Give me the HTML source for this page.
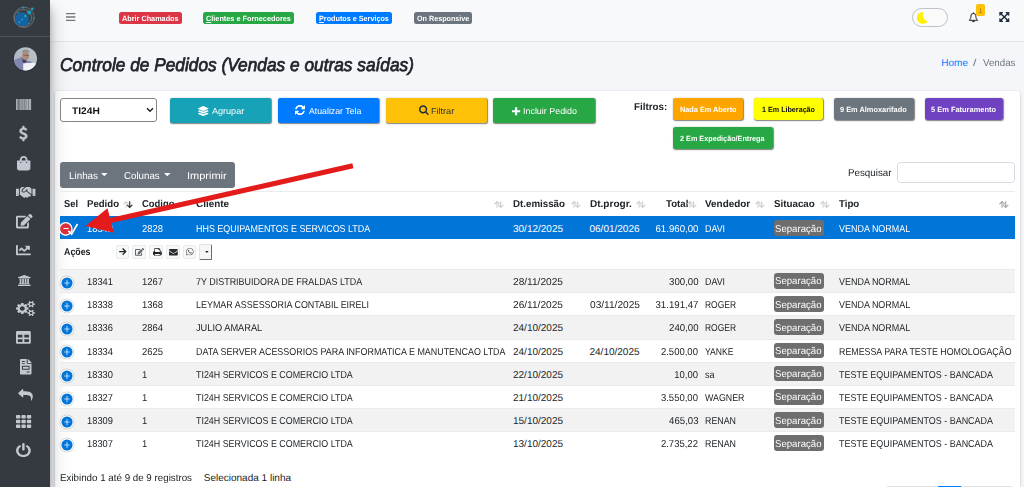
<!DOCTYPE html>
<html lang="pt-BR"><head><meta charset="utf-8"><title>Controle de Pedidos</title><style>
*{box-sizing:border-box}
html,body{margin:0;padding:0}
body{text-rendering:geometricPrecision;width:1024px;height:487px;overflow:hidden;background:#f4f6f9;font-family:"Liberation Sans",sans-serif;position:relative}
.t{position:absolute;white-space:nowrap;line-height:1;display:block}
.i{position:absolute;display:block;overflow:visible}
.b{position:absolute}
</style></head><body>
<div class="b" style="left:50px;top:0px;width:974.00px;height:41.80px;background:#f8f9fa;border-bottom:1px solid #e4e7ea"></div>
<div class="b" style="left:55px;top:91.1px;width:964.80px;height:408.90px;background:#fff;border-radius:2px;box-shadow:0 0 1px rgba(0,0,0,.125),0 1px 3px rgba(0,0,0,.2)"></div>
<div class="b" style="left:0px;top:0px;width:50.00px;height:487.00px;background:#343a40;box-shadow:0 9.5px 19px rgba(0,0,0,.25),0 6.8px 6.8px rgba(0,0,0,.22)"></div>
<div class="b" style="left:0px;top:36px;width:50.00px;height:1.00px;background:#4b545c"></div>
<svg class="i" style="left:10px;top:3px" width="30" height="30" viewBox="10 3 30 30">
<circle cx="24" cy="17.3" r="10.2" fill="#3a4248" stroke="#8a949c" stroke-width=".5"/>
<circle cx="23" cy="18" r="8.6" fill="none" stroke="#9aa3aa" stroke-width=".4"/>
<circle cx="22" cy="19.3" r="6.9" fill="#1363a4"/>
<circle cx="29.2" cy="12.5" r="2" fill="#1aa3c4"/>
<circle cx="23.4" cy="7.4" r="1" fill="#1aa3c4"/>
<circle cx="32.3" cy="8.8" r="1.4" fill="#1aa3c4"/>
<circle cx="25.3" cy="16.1" r="1.3" fill="#1aa3c4"/>
<circle cx="22.2" cy="19.5" r="1" fill="#1aa3c4"/>
<circle cx="19.5" cy="22.3" r="1" fill="#1aa3c4"/>
<circle cx="33.9" cy="18.3" r=".8" fill="#1aa3c4"/>
<circle cx="28.8" cy="23.4" r=".7" fill="#1aa3c4"/>
<circle cx="18.3" cy="12.8" r=".8" fill="#1aa3c4"/>
</svg>
<svg class="i" style="left:10px;top:44px" width="32" height="32" viewBox="10 44 32 32">
<defs><clipPath id="av"><circle cx="25.5" cy="58.8" r="11.6"/></clipPath><filter id="bl" x="-20%" y="-20%" width="140%" height="140%"><feGaussianBlur stdDeviation=".55"/></filter>
<linearGradient id="avbg" x1="0" y1="1" x2="1" y2="0"><stop offset="0" stop-color="#a9b2bd"/><stop offset="1" stop-color="#bcc4cd"/></linearGradient></defs>
<circle cx="25.5" cy="59.6" r="12" fill="rgba(0,0,0,.28)" filter="url(#bl)"/>
<g clip-path="url(#av)">
<rect x="10" y="44" width="32" height="32" fill="url(#avbg)"/>
<g filter="url(#bl)">
<path d="M12 61 L21.8 56.8 L26 60.5 L31.5 61.6 L31.5 64.5 L23.4 64 L23.4 72 L12 72Z" fill="#7f87b1"/>
<ellipse cx="25.6" cy="55.8" rx="3.5" ry="4.9" fill="#b18b79"/>
<path d="M22.4 59 L27 60.8 L24.4 63.8 L22.6 62Z" fill="#3f3f58"/>
<path d="M21.9 52.8 C21.8 48.6 29.6 48.4 29.6 52.6 C27.5 51.2 24 51.2 21.9 52.8Z" fill="#8b8f96"/>
<path d="M23.4 55.2 L29 55.5" stroke="#4a4350" stroke-width=".7" opacity=".8"/>
<path d="M23.3 63.2 L35.4 62.8 L36.2 66 L37 73 L23.3 73Z" fill="#f1f2f4"/>
</g></g></svg>
<div class="b" style="left:15.8px;top:98.9px;width:15.10px;height:10.90px;background:rgba(194,199,208,.38)"></div>
<svg class="i" style="left:15.8px;top:98.9px" width="15.10" height="10.90" viewBox="0 64 512 384" preserveAspectRatio="none"><path fill="#c2c7d0" d="M0 448V64h18v384H0zm26.857-.273V64H36v383.727h-9.143zm27.143 0V64h8.857v383.727H54zm44.857 0V64h8.857v383.727h-8.857zm36 0V64h17.714v383.727h-17.714zm44.857 0V64h8.857v383.727h-8.857zm18 0V64h8.857v383.727h-8.857zm18 0V64h8.857v383.727h-8.857zm35.715 0V64h18v383.727h-18zm44.857 0V64h18v383.727h-18zm35.999 0V64h18.001v383.727h-18.001zm36.001 0V64h18.001v383.727h-18.001zm26.857 0V64h18v383.727h-18zm45.143 0V64h26.857v383.727h-26.857zm35.714 0V64h9.143v383.727H476zm18 .273V64h18v384h-18z"/></svg>
<svg class="i" style="left:18.9px;top:126.2px;stroke:#c2c7d0;stroke-width:60;" width="8.70" height="15.10" viewBox="45.0 -1536.0 933.0 1792.0" preserveAspectRatio="xMidYMid meet"><path fill="#c2c7d0" transform="scale(1,-1)" d="M978 351q0 -153 -99.5 -263.5t-258.5 -136.5v-175q0 -14 -9 -23t-23 -9h-135q-13 0 -22.5 9.5t-9.5 22.5v175q-66 9 -127.5 31t-101.5 44.5t-74 48t-46.5 37.5t-17.5 18q-17 21 -2 41l103 135q7 10 23 12q15 2 24 -9l2 -2q113 -99 243 -125q37 -8 74 -8q81 0 142.5 43 t61.5 122q0 28 -15 53t-33.5 42t-58.5 37.5t-66 32t-80 32.5q-39 16 -61.5 25t-61.5 26.5t-62.5 31t-56.5 35.5t-53.5 42.5t-43.5 49t-35.5 58t-21 66.5t-8.5 78q0 138 98 242t255 134v180q0 13 9.5 22.5t22.5 9.5h135q14 0 23 -9t9 -23v-176q57 -6 110.5 -23t87 -33.5 t63.5 -37.5t39 -29t15 -14q17 -18 5 -38l-81 -146q-8 -15 -23 -16q-14 -3 -27 7q-3 3 -14.5 12t-39 26.5t-58.5 32t-74.5 26t-85.5 11.5q-95 0 -155 -43t-60 -111q0 -26 8.5 -48t29.5 -41.5t39.5 -33t56 -31t60.5 -27t70 -27.5q53 -20 81 -31.5t76 -35t75.5 -42.5t62 -50 t53 -63.5t31.5 -76.5t13 -94z"/></svg>
<svg class="i" style="left:17px;top:155.5px" width="13.40" height="14.50" viewBox="0 0 448 512" preserveAspectRatio="none"><path fill="#c2c7d0" d="M352 160v-32C352 57.42 294.579 0 224 0 153.42 0 96 57.42 96 128v32H0v272c0 44.183 35.817 80 80 80h288c44.183 0 80-35.817 80-80V160h-96zm-192-32c0-35.29 28.710-64 64-64s64 28.710 64 64v32H160v-32zm160 120c-13.255 0-24-10.745-24-24s10.745-24 24-24 24 10.745 24 24-10.745 24-24 24zm-192 0c-13.255 0-24-10.745-24-24s10.745-24 24-24 24 10.745 24 24-10.745 24-24 24z"/></svg>
<svg class="i" style="left:15.8px;top:186.6px" width="19.40" height="10.70" viewBox="0 64 640 384" preserveAspectRatio="none"><path fill="#c2c7d0" d="M434.700 64h-85.900c-8 0-15.700 3-21.600 8.400l-98.300 90c-.1.100-.2.300-.3.400-16.600 15.600-16.300 40.500-2.100 56 12.700 13.900 39.400 17.600 56.100 2.700.1-.1.300-.1.400-.2l79.900-73.200c6.500-5.900 16.700-5.500 22.600 1 6 6.500 5.500 16.600-1 22.600l-26.100 23.900L504 313.800c2.900 2.400 5.500 5 7.900 7.700V128l-54.600-54.600c-5.900-6-14.100-9.400-22.600-9.400zM544 128.200v223.900c0 17.700 14.300 32 32 32h64V128.200h-96zm48 223.900c-8.800 0-16-7.200-16-16s7.200-16 16-16 16 7.200 16 16-7.200 16-16 16zM0 384h64c17.700 0 32-14.300 32-32V128.200H0V384zm48-63.900c8.800 0 16 7.200 16 16s-7.200 16-16 16-16-7.200-16-16c0-8.900 7.200-16 16-16zm435.900 18.600L334.600 217.500l-30 27.500c-29.700 27.100-75.200 24.500-101.700-4.400-26.900-29.400-24.800-74.900 4.400-101.700L289.100 64h-83.800c-8.500 0-16.600 3.400-22.600 9.400L128 128v223.900h18.300l90.500 81.900c27.400 22.300 67.700 18.100 90-9.300l.2-.2 17.900 15.500c15.900 13 39.400 10.500 52.300-5.400l31.400-38.600 5.400 4.400c13.700 11.100 33.900 9.100 45-4.700l9.500-11.700c11.200-13.800 9.100-33.900-4.600-45.100z"/></svg>
<svg class="i" style="left:16.1px;top:213.9px" width="16.60" height="14.40" viewBox="0 0 576 512" preserveAspectRatio="none"><path fill="#c2c7d0" d="M402.600 83.200l90.200 90.200c3.800 3.800 3.800 10 0 13.800L274.400 405.600l-92.800 10.300c-12.400 1.400-22.900-9.100-21.500-21.500l10.300-92.800L388.800 83.200c3.800-3.800 10-3.800 13.800 0zm162-22.900l-48.800-48.800c-15.200-15.200-39.900-15.200-55.200 0l-35.400 35.400c-3.800 3.800-3.800 10 0 13.800l90.200 90.200c3.800 3.800 10 3.800 13.800 0l35.400-35.400c15.200-15.300 15.200-40 0-55.200zM384 346.200V448H64V128h229.800c3.200 0 6.200-1.300 8.500-3.500l40-40c7.600-7.600 2.200-20.500-8.500-20.500H48C21.500 64 0 85.500 0 112v352c0 26.500 21.500 48 48 48h352c26.500 0 48-21.500 48-48V306.200c0-10.700-12.900-16-20.500-8.500l-40 40c-2.200 2.300-3.500 5.300-3.500 8.500z"/></svg>
<svg class="i" style="left:16.1px;top:244.9px" width="14.80" height="10.30" viewBox="0 64 512 384" preserveAspectRatio="none"><path fill="#c2c7d0" d="M496 384H64V80c0-8.840-7.160-16-16-16H16C7.160 64 0 71.160 0 80v336c0 17.670 14.330 32 32 32h464c8.840 0 16-7.160 16-16v-32c0-8.840-7.160-16-16-16zM464 96H345.940c-21.380 0-32.090 25.850-16.970 40.970l32.400 32.400L288 242.750l-73.370-73.370c-12.500-12.500-32.760-12.500-45.250 0l-68.690 68.690c-6.250 6.250-6.250 16.380 0 22.630l22.620 22.620c6.250 6.250 16.380 6.250 22.630 0L192 237.250l73.370 73.370c12.500 12.500 32.760 12.500 45.250 0l96-96 32.400 32.400c15.120 15.120 40.970 4.410 40.970-16.970V112c.01-8.840-7.150-16-15.990-16z"/></svg>
<svg class="i" style="left:17.8px;top:274.6px;" width="12.60" height="10.90" viewBox="0.0 -1536.0 1920.0 1792.0" preserveAspectRatio="none"><path fill="#c2c7d0" transform="scale(1,-1)" d="M960 1536l960 -384v-128h-128q0 -26 -20.5 -45t-48.5 -19h-1526q-28 0 -48.5 19t-20.5 45h-128v128zM256 896h256v-768h128v768h256v-768h128v768h256v-768h128v768h256v-768h59q28 0 48.5 -19t20.5 -45v-64h-1664v64q0 26 20.5 45t48.5 19h59v768zM1851 -64 q28 0 48.5 -19t20.5 -45v-128h-1920v128q0 26 20.5 45t48.5 19h1782z"/></svg>
<svg class="i" style="left:15.8px;top:301px;" width="18.90" height="15.00" viewBox="0.0 -1520.0 1920.0 1761.0" preserveAspectRatio="none"><path fill="#c2c7d0" transform="scale(1,-1)" d="M896 640q0 106 -75 181t-181 75t-181 -75t-75 -181t75 -181t181 -75t181 75t75 181zM1664 128q0 52 -38 90t-90 38t-90 -38t-38 -90q0 -53 37.5 -90.5t90.5 -37.5t90.5 37.5t37.5 90.5zM1664 1152q0 52 -38 90t-90 38t-90 -38t-38 -90q0 -53 37.5 -90.5t90.5 -37.5 t90.5 37.5t37.5 90.5zM1280 731v-185q0 -10 -7 -19.5t-16 -10.5l-155 -24q-11 -35 -32 -76q34 -48 90 -115q7 -11 7 -20q0 -12 -7 -19q-23 -30 -82.5 -89.5t-78.5 -59.5q-11 0 -21 7l-115 90q-37 -19 -77 -31q-11 -108 -23 -155q-7 -24 -30 -24h-186q-11 0 -20 7.5t-10 17.5 l-23 153q-34 10 -75 31l-118 -89q-7 -7 -20 -7q-11 0 -21 8q-144 133 -144 160q0 9 7 19q10 14 41 53t47 61q-23 44 -35 82l-152 24q-10 1 -17 9.5t-7 19.5v185q0 10 7 19.5t16 10.5l155 24q11 35 32 76q-34 48 -90 115q-7 11 -7 20q0 12 7 20q22 30 82 89t79 59q11 0 21 -7 l115 -90q34 18 77 32q11 108 23 154q7 24 30 24h186q11 0 20 -7.5t10 -17.5l23 -153q34 -10 75 -31l118 89q8 7 20 7q11 0 21 -8q144 -133 144 -160q0 -8 -7 -19q-12 -16 -42 -54t-45 -60q23 -48 34 -82l152 -23q10 -2 17 -10.5t7 -19.5zM1920 198v-140q0 -16 -149 -31 q-12 -27 -30 -52q51 -113 51 -138q0 -4 -4 -7q-122 -71 -124 -71q-8 0 -46 47t-52 68q-20 -2 -30 -2t-30 2q-14 -21 -52 -68t-46 -47q-2 0 -124 71q-4 3 -4 7q0 25 51 138q-18 25 -30 52q-149 15 -149 31v140q0 16 149 31q13 29 30 52q-51 113 -51 138q0 4 4 7q4 2 35 20 t59 34t30 16q8 0 46 -46.5t52 -67.5q20 2 30 2t30 -2q51 71 92 112l6 2q4 0 124 -70q4 -3 4 -7q0 -25 -51 -138q17 -23 30 -52q149 -15 149 -31zM1920 1222v-140q0 -16 -149 -31q-12 -27 -30 -52q51 -113 51 -138q0 -4 -4 -7q-122 -71 -124 -71q-8 0 -46 47t-52 68 q-20 -2 -30 -2t-30 2q-14 -21 -52 -68t-46 -47q-2 0 -124 71q-4 3 -4 7q0 25 51 138q-18 25 -30 52q-149 15 -149 31v140q0 16 149 31q13 29 30 52q-51 113 -51 138q0 4 4 7q4 2 35 20t59 34t30 16q8 0 46 -46.5t52 -67.5q20 2 30 2t30 -2q51 71 92 112l6 2q4 0 124 -70 q4 -3 4 -7q0 -25 -51 -138q17 -23 30 -52q149 -15 149 -31z"/></svg>
<svg class="i" style="left:16.1px;top:331.2px" width="14.80" height="12.80" viewBox="0 32 512 448" preserveAspectRatio="none"><path fill="#c2c7d0" d="M464 32H48C21.490 32 0 53.490 0 80v352c0 26.510 21.490 48 48 48h416c26.510 0 48-21.490 48-48V80c0-26.510-21.490-48-48-48zM224 416H64v-96h160v96zm0-160H64v-96h160v96zm224 160H288v-96h160v96zm0-160H288v-96h160v96z"/></svg>
<svg class="i" style="left:19.6px;top:359.3px" width="11.50" height="15.50" viewBox="0 0 384 512" preserveAspectRatio="none"><path fill="#c2c7d0" d="M288 256H96v64h192v-64zm89-151L279.100 7c-4.500-4.500-10.600-7-17-7H256v128h128v-6.100c0-6.300-2.500-12.400-7-16.900zm-153 31V0H24C10.700 0 0 10.700 0 24v464c0 13.300 10.700 24 24 24h336c13.300 0 24-10.700 24-24V160H248c-13.200 0-24-10.800-24-24zM64 72c0-4.420 3.580-8 8-8h80c4.420 0 8 3.580 8 8v16c0 4.420-3.580 8-8 8H72c-4.420 0-8-3.580-8-8V72zm0 64c0-4.420 3.580-8 8-8h80c4.420 0 8 3.580 8 8v16c0 4.420-3.580 8-8 8H72c-4.420 0-8-3.580-8-8v-16zm256 304c0 4.420-3.580 8-8 8h-80c-4.420 0-8-3.580-8-8v-16c0-4.420 3.580-8 8-8h80c4.420 0 8 3.580 8 8v16zm0-200v96c0 8.840-7.160 16-16 16H80c-8.840 0-16-7.160-16-16v-96c0-8.840 7.160-16 16-16h224c8.840 0 16 7.160 16 16z"/></svg>
<svg class="i" style="left:17.8px;top:388.7px;" width="14.80" height="11.70" viewBox="0.0 -1472.0 1792.0 1600.0" preserveAspectRatio="none"><path fill="#c2c7d0" transform="scale(1,-1)" d="M1792 416q0 -166 -127 -451q-3 -7 -10.5 -24t-13.5 -30t-13 -22q-12 -17 -28 -17q-15 0 -23.5 10t-8.5 25q0 9 2.5 26.5t2.5 23.5q5 68 5 123q0 101 -17.5 181t-48.5 138.5t-80 101t-105.5 69.5t-133 42.5t-154 21.5t-175.5 6h-224v-256q0 -26 -19 -45t-45 -19t-45 19 l-512 512q-19 19 -19 45t19 45l512 512q19 19 45 19t45 -19t19 -45v-256h224q713 0 875 -403q53 -134 53 -333z"/></svg>
<svg class="i" style="left:16.2px;top:415px;" width="15.20" height="13.00" viewBox="0.0 -1408.0 1792.0 1408.0" preserveAspectRatio="none"><path fill="#c2c7d0" transform="scale(1,-1)" d="M512 288v-192q0 -40 -28 -68t-68 -28h-320q-40 0 -68 28t-28 68v192q0 40 28 68t68 28h320q40 0 68 -28t28 -68zM512 800v-192q0 -40 -28 -68t-68 -28h-320q-40 0 -68 28t-28 68v192q0 40 28 68t68 28h320q40 0 68 -28t28 -68zM1152 288v-192q0 -40 -28 -68t-68 -28h-320 q-40 0 -68 28t-28 68v192q0 40 28 68t68 28h320q40 0 68 -28t28 -68zM512 1312v-192q0 -40 -28 -68t-68 -28h-320q-40 0 -68 28t-28 68v192q0 40 28 68t68 28h320q40 0 68 -28t28 -68zM1152 800v-192q0 -40 -28 -68t-68 -28h-320q-40 0 -68 28t-28 68v192q0 40 28 68t68 28 h320q40 0 68 -28t28 -68zM1792 288v-192q0 -40 -28 -68t-68 -28h-320q-40 0 -68 28t-28 68v192q0 40 28 68t68 28h320q40 0 68 -28t28 -68zM1152 1312v-192q0 -40 -28 -68t-68 -28h-320q-40 0 -68 28t-28 68v192q0 40 28 68t68 28h320q40 0 68 -28t28 -68zM1792 800v-192 q0 -40 -28 -68t-68 -28h-320q-40 0 -68 28t-28 68v192q0 40 28 68t68 28h320q40 0 68 -28t28 -68zM1792 1312v-192q0 -40 -28 -68t-68 -28h-320q-40 0 -68 28t-28 68v192q0 40 28 68t68 28h320q40 0 68 -28t28 -68z"/></svg>
<svg class="i" style="left:16.2px;top:442.6px;" width="14.80" height="14.10" viewBox="0.0 -1536.0 1536.0 1664.0" preserveAspectRatio="none"><path fill="#c2c7d0" transform="scale(1,-1)" d="M1536 640q0 -156 -61 -298t-164 -245t-245 -164t-298 -61t-298 61t-245 164t-164 245t-61 298q0 182 80.5 343t226.5 270q43 32 95.5 25t83.5 -50q32 -42 24.5 -94.5t-49.5 -84.5q-98 -74 -151.5 -181t-53.5 -228q0 -104 40.5 -198.5t109.5 -163.5t163.5 -109.5 t198.5 -40.5t198.5 40.5t163.5 109.5t109.5 163.5t40.5 198.5q0 121 -53.5 228t-151.5 181q-42 32 -49.5 84.5t24.5 94.5q31 43 84 50t95 -25q146 -109 226.5 -270t80.5 -343zM896 1408v-640q0 -52 -38 -90t-90 -38t-90 38t-38 90v640q0 52 38 90t90 38t90 -38t38 -90z"/></svg>
<svg class="i" style="left:65.9px;top:12px" width="9.4" height="10" viewBox="0 0 9.4 10"><path d="M0 .9h9.4v1.3h-9.4zM0 4.25h9.4v1.4h-9.4zM0 7.7h9.4v1.3h-9.4z" fill="#72777c"/></svg>
<div class="b" style="left:118.5px;top:12px;width:63.00px;height:12.00px;background:#dc3545;border-radius:2.5px"></div>
<span id="t1" class="t" style="left:121.7px;transform-origin:0 0;top:15.00px;font-size:7.5px;font-weight:700;color:#fff;font-style:normal;transform:scaleX(0.9699);">Abrir Chamados</span>
<div class="b" style="left:203px;top:12px;width:91.30px;height:12.00px;background:#28a745;border-radius:2.5px"></div>
<span id="t2" class="t" style="left:206.2px;transform-origin:0 0;top:15.00px;font-size:7.5px;font-weight:700;color:#fff;font-style:normal;transform:scaleX(0.9745);"><u>C</u>lientes e Fornecedores</span>
<div class="b" style="left:316px;top:12px;width:76.30px;height:12.00px;background:#007bff;border-radius:2.5px"></div>
<span id="t3" class="t" style="left:319.2px;transform-origin:0 0;top:15.00px;font-size:7.5px;font-weight:700;color:#fff;font-style:normal;transform:scaleX(0.9635);"><u>P</u>rodutos e Serviços</span>
<div class="b" style="left:413.8px;top:12px;width:58.70px;height:12.00px;background:#6c757d;border-radius:2.5px"></div>
<span id="t4" class="t" style="left:417.0px;transform-origin:0 0;top:15.00px;font-size:7.5px;font-weight:700;color:#fff;font-style:normal;transform:scaleX(0.9577);">On Responsive</span>
<div class="b" style="left:912px;top:8.2px;width:36.00px;height:18.60px;background:#fafafa;border:1.2px solid #bcc2c8;border-radius:10px"></div>
<svg class="i" style="left:916.5px;top:12px" width="12" height="12" viewBox="0 0 12 12"><path d="M6.3 .1 A5.9 5.9 0 1 0 10.6 9.4 A7 7 0 0 1 6.3 .1Z" fill="#fff000"/></svg>
<svg class="i" style="left:969px;top:11.7px;stroke:#343a40;stroke-width:70;" width="8.80" height="10.60" viewBox="64.0 -1536.0 1664.0 1792.0" preserveAspectRatio="xMidYMid meet"><path fill="#343a40" transform="scale(1,-1)" d="M912 -160q0 16 -16 16q-59 0 -101.5 42.5t-42.5 101.5q0 16 -16 16t-16 -16q0 -73 51.5 -124.5t124.5 -51.5q16 0 16 16zM246 128h1300q-266 300 -266 832q0 51 -24 105t-69 103t-121.5 80.5t-169.5 31.5t-169.5 -31.5t-121.5 -80.5t-69 -103t-24 -105q0 -532 -266 -832z M1728 128q0 -52 -38 -90t-90 -38h-448q0 -106 -75 -181t-181 -75t-181 75t-75 181h-448q-52 0 -90 38t-38 90q50 42 91 88t85 119.5t74.5 158.5t50 206t19.5 260q0 152 117 282.5t307 158.5q-8 19 -8 39q0 40 28 68t68 28t68 -28t28 -68q0 -20 -8 -39q190 -28 307 -158.5 t117 -282.5q0 -139 19.5 -260t50 -206t74.5 -158.5t85 -119.5t91 -88z"/></svg>
<div class="b" style="left:976.1px;top:4.1px;width:8.70px;height:11.70px;background:#ffc107;border-radius:2px"></div>
<span id="t5" class="t" style="left:979.2px;transform-origin:0 0;top:9.00px;font-size:6.6px;font-weight:400;color:#7a6414;font-style:normal;transform:scaleX(0.8170);">1</span>
<svg class="i" style="left:999.4px;top:12px;" width="10.60" height="10.00" viewBox="0.0 -1408.0 1536.0 1536.0" preserveAspectRatio="xMidYMid meet"><path fill="#1f2d3d" transform="scale(1,-1)" d="M1283 995l-355 -355l355 -355l144 144q29 31 70 14q39 -17 39 -59v-448q0 -26 -19 -45t-45 -19h-448q-42 0 -59 40q-17 39 14 69l144 144l-355 355l-355 -355l144 -144q31 -30 14 -69q-17 -40 -59 -40h-448q-26 0 -45 19t-19 45v448q0 42 40 59q39 17 69 -14l144 -144 l355 355l-355 355l-144 -144q-19 -19 -45 -19q-12 0 -24 5q-40 17 -40 59v448q0 26 19 45t45 19h448q42 0 59 -40q17 -39 -14 -69l-144 -144l355 -355l355 355l-144 144q-31 30 -14 69q17 40 59 40h448q26 0 45 -19t19 -45v-448q0 -42 -39 -59q-13 -5 -25 -5q-26 0 -45 19z "/></svg>
<span id="t6" class="t" style="left:60px;transform-origin:0 0;top:56.00px;font-size:18.5px;font-weight:400;color:#212529;font-style:italic;transform:scaleX(0.9345);-webkit-text-stroke:.75px #212529;">Controle de Pedidos (Vendas e outras saídas)</span>
<span id="t7" class="t" style="left:941.3px;transform-origin:0 0;top:59.00px;font-size:10px;font-weight:400;color:#007bff;font-style:normal;">Home</span>
<span id="t8" class="t" style="left:973.4px;transform-origin:0 0;top:59.00px;font-size:10px;font-weight:400;color:#6c757d;font-style:normal;transform:scaleX(1.2225);">/</span>
<span id="t9" class="t" style="left:982.8px;transform-origin:0 0;top:59.00px;font-size:10px;font-weight:400;color:#6c757d;font-style:normal;transform:scaleX(0.9738);">Vendas</span>
<div class="b" style="left:60px;top:97.5px;width:96.50px;height:24.50px;background:#fff;border:1px solid #858585;border-radius:3px"></div>
<span id="t10" class="t" style="left:71.6px;transform-origin:0 0;top:107.00px;font-size:9.5px;font-weight:700;color:#111;font-style:normal;transform:scaleX(1.0744);">TI24H</span>
<svg class="i" style="left:146px;top:107px" width="8" height="6" viewBox="0 0 8 6"><path d="M1 1.2 L4 4.3 L7 1.2" fill="none" stroke="#222" stroke-width="1.4"/></svg>
<div class="b" style="left:170px;top:97.8px;width:101.20px;height:25.40px;background:#17a2b8;border-radius:2.5px;box-shadow:.8px .8px 1.2px rgba(0,0,0,.5)"></div>
<svg class="i" style="left:198px;top:105.8px" width="10.50" height="10.10" viewBox="0 0 512 512" preserveAspectRatio="none"><path fill="#fff" d="M12.410 148.020l232.940 105.670c6.800 3.090 14.490 3.090 21.290 0l232.940-105.670c16.550-7.510 16.550-32.520 0-40.030L266.650 2.310a25.607 25.607 0 0 0-21.290 0L12.410 107.980c-16.550 7.510-16.550 32.530 0 40.040zm487.180 88.280l-58.090-26.330-161.640 73.270c-7.560 3.430-15.590 5.170-23.860 5.170s-16.290-1.740-23.860-5.170L70.510 209.970l-58.100 26.330c-16.550 7.500-16.550 32.500 0 40l232.940 105.590c6.800 3.080 14.490 3.080 21.290 0L499.590 276.300c16.550-7.500 16.550-32.500 0-40zm0 127.800l-57.870-26.230-161.860 73.370c-7.560 3.430-15.590 5.170-23.860 5.170s-16.290-1.740-23.860-5.170L70.290 337.870 12.410 364.100c-16.550 7.500-16.550 32.500 0 40l232.940 105.590c6.800 3.080 14.490 3.080 21.290 0L499.590 404.100c16.550-7.500 16.550-32.500 0-40z"/></svg>
<span id="t11" class="t" style="left:212px;transform-origin:0 0;top:107.00px;font-size:8.8px;font-weight:400;color:#fff;font-style:normal;transform:scaleX(1.0289);">Agrupar</span>
<div class="b" style="left:277.8px;top:97.8px;width:101.20px;height:25.40px;background:#007bff;border-radius:2.5px;box-shadow:.8px .8px 1.2px rgba(0,0,0,.5)"></div>
<div class="b" style="left:385.5px;top:97.8px;width:101.10px;height:25.40px;background:#ffc107;border-radius:2.5px;box-shadow:.8px .8px 1.2px rgba(0,0,0,.5)"></div>
<div class="b" style="left:493px;top:97.8px;width:102.00px;height:25.40px;background:#28a745;border-radius:2.5px;box-shadow:.8px .8px 1.2px rgba(0,0,0,.5)"></div>
<svg class="i" style="left:295px;top:105.2px;" width="10.00" height="10.00" viewBox="0.0 -1408.0 1536.0 1536.0" preserveAspectRatio="xMidYMid meet"><path fill="#fff" transform="scale(1,-1)" d="M1511 480q0 -5 -1 -7q-64 -268 -268 -434.5t-478 -166.5q-146 0 -282.5 55t-243.5 157l-129 -129q-19 -19 -45 -19t-45 19t-19 45v448q0 26 19 45t45 19h448q26 0 45 -19t19 -45t-19 -45l-137 -137q71 -66 161 -102t187 -36q134 0 250 65t186 179q11 17 53 117 q8 23 30 23h192q13 0 22.5 -9.5t9.5 -22.5zM1536 1280v-448q0 -26 -19 -45t-45 -19h-448q-26 0 -45 19t-19 45t19 45l138 138q-148 137 -349 137q-134 0 -250 -65t-186 -179q-11 -17 -53 -117q-8 -23 -30 -23h-199q-13 0 -22.5 9.5t-9.5 22.5v7q65 268 270 434.5t480 166.5 q146 0 284 -55.5t245 -156.5l130 129q19 19 45 19t45 -19t19 -45z"/></svg>
<span id="t12" class="t" style="left:309.4px;transform-origin:0 0;top:107.00px;font-size:8.8px;font-weight:400;color:#fff;font-style:normal;transform:scaleX(0.9932);">Atualizar Tela</span>
<svg class="i" style="left:418.5px;top:104.75px;" width="9.70" height="10.25" viewBox="0.0 -1408.0 1664.0 1664.0" preserveAspectRatio="xMidYMid meet"><path fill="#1f2d3d" transform="scale(1,-1)" d="M1152 704q0 185 -131.5 316.5t-316.5 131.5t-316.5 -131.5t-131.5 -316.5t131.5 -316.5t316.5 -131.5t316.5 131.5t131.5 316.5zM1664 -128q0 -52 -38 -90t-90 -38q-54 0 -90 38l-343 342q-179 -124 -399 -124q-143 0 -273.5 55.5t-225 150t-150 225t-55.5 273.5 t55.5 273.5t150 225t225 150t273.5 55.5t273.5 -55.5t225 -150t150 -225t55.5 -273.5q0 -220 -124 -399l343 -343q37 -37 37 -90z"/></svg>
<span id="t13" class="t" style="left:430.9px;transform-origin:0 0;top:107.00px;font-size:8.8px;font-weight:400;color:#1f2d3d;font-style:normal;transform:scaleX(1.0318);">Filtrar</span>
<svg class="i" style="left:512px;top:106.5px;" width="8.20" height="8.50" viewBox="0.0 -1408.0 1408.0 1408.0" preserveAspectRatio="xMidYMid meet"><path fill="#fff" transform="scale(1,-1)" d="M1408 800v-192q0 -40 -28 -68t-68 -28h-416v-416q0 -40 -28 -68t-68 -28h-192q-40 0 -68 28t-28 68v416h-416q-40 0 -68 28t-28 68v192q0 40 28 68t68 28h416v416q0 40 28 68t68 28h192q40 0 68 -28t28 -68v-416h416q40 0 68 -28t28 -68z"/></svg>
<span id="t14" class="t" style="left:522.8px;transform-origin:0 0;top:107.00px;font-size:8.8px;font-weight:400;color:#fff;font-style:normal;transform:scaleX(1.0129);">Incluir Pedido</span>
<span id="t15" class="t" style="left:633.6px;transform-origin:0 0;top:103.00px;font-size:10px;font-weight:700;color:#212529;font-style:normal;transform:scaleX(0.9781);">Filtros:</span>
<div class="b" style="left:672.75px;top:98.2px;width:70.50px;height:21.70px;background:#ffa500;border-radius:3px;box-shadow:.8px .8px 1.2px rgba(0,0,0,.5)"></div>
<span id="t16" class="t" style="left:679.9px;transform-origin:0 0;top:106.00px;font-size:7.5px;font-weight:700;color:#fff;font-style:normal;transform:scaleX(0.9745);">Nada Em Aberto</span>
<div class="b" style="left:754px;top:98.2px;width:69.00px;height:21.70px;background:#ffff00;border-radius:3px;box-shadow:.8px .8px 1.2px rgba(0,0,0,.5)"></div>
<span id="t17" class="t" style="left:762px;transform-origin:0 0;top:106.00px;font-size:7.5px;font-weight:700;color:#111;font-style:normal;transform:scaleX(0.9558);">1 Em Liberação</span>
<div class="b" style="left:833.5px;top:98.2px;width:80.75px;height:21.70px;background:#6c757d;border-radius:3px;box-shadow:.8px .8px 1.2px rgba(0,0,0,.5)"></div>
<span id="t18" class="t" style="left:840px;transform-origin:0 0;top:106.00px;font-size:7.5px;font-weight:700;color:#fff;font-style:normal;transform:scaleX(0.9864);">9 Em Almoxarifado</span>
<div class="b" style="left:924.5px;top:98.2px;width:78.00px;height:21.70px;background:#6f42c1;border-radius:3px;box-shadow:.8px .8px 1.2px rgba(0,0,0,.5)"></div>
<span id="t19" class="t" style="left:931px;transform-origin:0 0;top:106.00px;font-size:7.5px;font-weight:700;color:#fff;font-style:normal;transform:scaleX(0.9933);">5 Em Faturamento</span>
<div class="b" style="left:672.75px;top:127.2px;width:99.75px;height:21.70px;background:#28a745;border-radius:3px;box-shadow:.8px .8px 1.2px rgba(0,0,0,.5)"></div>
<span id="t20" class="t" style="left:679.9px;transform-origin:0 0;top:135.00px;font-size:7.5px;font-weight:700;color:#fff;font-style:normal;transform:scaleX(0.9663);">2 Em Expedição/Entrega</span>
<div class="b" style="left:60px;top:162.2px;width:174.80px;height:25.60px;background:#6c757d;border-radius:3px"></div>
<span id="t21" class="t" style="left:69px;transform-origin:0 0;top:172.00px;font-size:10px;font-weight:400;color:#fff;font-style:normal;transform:scaleX(0.9841);">Linhas</span>
<span id="t22" class="t" style="left:124.25px;transform-origin:0 0;top:172.00px;font-size:10px;font-weight:400;color:#fff;font-style:normal;transform:scaleX(0.9740);">Colunas</span>
<span id="t23" class="t" style="left:186.6px;transform-origin:0 0;top:172.00px;font-size:10px;font-weight:400;color:#fff;font-style:normal;transform:scaleX(1.0994);">Imprimir</span>
<svg class="i" style="left:100.8px;top:172.5px" width="6.6" height="3.4" viewBox="0 0 10 5"><path d="M0 0H10L5 5Z" fill="#fff"/></svg>
<svg class="i" style="left:163.5px;top:172.5px" width="6.6" height="3.4" viewBox="0 0 10 5"><path d="M0 0H10L5 5Z" fill="#fff"/></svg>
<span id="t24" class="t" style="left:848.1px;transform-origin:0 0;top:169.00px;font-size:10px;font-weight:400;color:#212529;font-style:normal;transform:scaleX(0.9782);">Pesquisar</span>
<div class="b" style="left:896.5px;top:162.2px;width:118.80px;height:20.70px;background:#fff;border:1px solid #d6dbe0;border-radius:3.5px"></div>
<div class="b" style="left:60px;top:191.2px;width:955.30px;height:0.90px;background:#e9ecef"></div>
<div class="b" style="left:60px;top:215.5px;width:955.30px;height:0.90px;background:#eceef0"></div>
<span id="t25" class="t" style="left:63.5px;transform-origin:0 0;top:200.00px;font-size:10px;font-weight:700;color:#212529;font-style:normal;transform:scaleX(0.9324);">Sel</span>
<span id="t26" class="t" style="left:87px;transform-origin:0 0;top:200.00px;font-size:10px;font-weight:700;color:#212529;font-style:normal;transform:scaleX(0.9597);">Pedido</span>
<svg class="i" style="left:122.9px;top:201.3px" width="9.8" height="7" viewBox="0 0 9.8 7"><path d="M3 .5V6.7M.4 3.2L3 .5L5.6 3.2" fill="none" stroke="#d4d6d9" stroke-width="1.15"/><path d="M6.7 .3V6.5M4.1 3.8L6.7 6.5L9.3 3.8" fill="none" stroke="#2b2f33" stroke-width="1.15"/></svg>
<span id="t27" class="t" style="left:141.5px;transform-origin:0 0;top:200.00px;font-size:10px;font-weight:700;color:#212529;font-style:normal;transform:scaleX(0.9437);">Codigo</span>
<span id="t28" class="t" style="left:196px;transform-origin:0 0;top:200.00px;font-size:10px;font-weight:700;color:#212529;font-style:normal;transform:scaleX(0.9897);">Cliente</span>
<svg class="i" style="left:494.1px;top:201.3px" width="9.8" height="7" viewBox="0 0 9.8 7"><path d="M3 .5V6.7M.4 3.2L3 .5L5.6 3.2" fill="none" stroke="#cdd0d3" stroke-width="1.15"/><path d="M6.7 .3V6.5M4.1 3.8L6.7 6.5L9.3 3.8" fill="none" stroke="#cdd0d3" stroke-width="1.15"/></svg>
<span id="t29" class="t" style="left:513.25px;transform-origin:0 0;top:200.00px;font-size:10px;font-weight:700;color:#212529;font-style:normal;transform:scaleX(0.9745);">Dt.emissão</span>
<svg class="i" style="left:570.7px;top:201.3px" width="9.8" height="7" viewBox="0 0 9.8 7"><path d="M3 .5V6.7M.4 3.2L3 .5L5.6 3.2" fill="none" stroke="#cdd0d3" stroke-width="1.15"/><path d="M6.7 .3V6.5M4.1 3.8L6.7 6.5L9.3 3.8" fill="none" stroke="#cdd0d3" stroke-width="1.15"/></svg>
<span id="t30" class="t" style="left:590px;transform-origin:0 0;top:200.00px;font-size:10px;font-weight:700;color:#212529;font-style:normal;transform:scaleX(1.0031);">Dt.progr.</span>
<svg class="i" style="left:636.4px;top:201.3px" width="9.8" height="7" viewBox="0 0 9.8 7"><path d="M3 .5V6.7M.4 3.2L3 .5L5.6 3.2" fill="none" stroke="#cdd0d3" stroke-width="1.15"/><path d="M6.7 .3V6.5M4.1 3.8L6.7 6.5L9.3 3.8" fill="none" stroke="#cdd0d3" stroke-width="1.15"/></svg>
<span id="t31" class="t" style="left:665.5px;transform-origin:0 0;top:200.00px;font-size:10px;font-weight:700;color:#212529;font-style:normal;transform:scaleX(0.9673);">Total</span>
<svg class="i" style="left:686.9px;top:201.3px" width="9.8" height="7" viewBox="0 0 9.8 7"><path d="M3 .5V6.7M.4 3.2L3 .5L5.6 3.2" fill="none" stroke="#cdd0d3" stroke-width="1.15"/><path d="M6.7 .3V6.5M4.1 3.8L6.7 6.5L9.3 3.8" fill="none" stroke="#cdd0d3" stroke-width="1.15"/></svg>
<span id="t32" class="t" style="left:705px;transform-origin:0 0;top:200.00px;font-size:10px;font-weight:700;color:#212529;font-style:normal;transform:scaleX(0.9917);">Vendedor</span>
<svg class="i" style="left:755.1px;top:201.3px" width="9.8" height="7" viewBox="0 0 9.8 7"><path d="M3 .5V6.7M.4 3.2L3 .5L5.6 3.2" fill="none" stroke="#cdd0d3" stroke-width="1.15"/><path d="M6.7 .3V6.5M4.1 3.8L6.7 6.5L9.3 3.8" fill="none" stroke="#cdd0d3" stroke-width="1.15"/></svg>
<span id="t33" class="t" style="left:774.25px;transform-origin:0 0;top:200.00px;font-size:10px;font-weight:700;color:#212529;font-style:normal;transform:scaleX(0.9775);">Situacao</span>
<svg class="i" style="left:819.5px;top:201.3px" width="9.8" height="7" viewBox="0 0 9.8 7"><path d="M3 .5V6.7M.4 3.2L3 .5L5.6 3.2" fill="none" stroke="#cdd0d3" stroke-width="1.15"/><path d="M6.7 .3V6.5M4.1 3.8L6.7 6.5L9.3 3.8" fill="none" stroke="#cdd0d3" stroke-width="1.15"/></svg>
<span id="t34" class="t" style="left:838.5px;transform-origin:0 0;top:200.00px;font-size:10px;font-weight:700;color:#212529;font-style:normal;transform:scaleX(0.9672);">Tipo</span>
<svg class="i" style="left:999.4px;top:201.3px" width="9.8" height="7" viewBox="0 0 9.8 7"><path d="M3 .5V6.7M.4 3.2L3 .5L5.6 3.2" fill="none" stroke="#a4a8ac" stroke-width="1.15"/><path d="M6.7 .3V6.5M4.1 3.8L6.7 6.5L9.3 3.8" fill="none" stroke="#a4a8ac" stroke-width="1.15"/></svg>
<div class="b" style="left:60px;top:216.3px;width:955.30px;height:22.60px;background:#0275d8"></div>
<span id="t35" class="t" style="left:87px;transform-origin:0 0;top:225.00px;font-size:10px;font-weight:400;color:#fff;font-style:normal;transform:scaleX(0.9348);">18342</span>
<span id="t36" class="t" style="left:141.5px;transform-origin:0 0;top:225.00px;font-size:10px;font-weight:400;color:#fff;font-style:normal;transform:scaleX(0.9438);">2828</span>
<span id="t37" class="t" style="left:196px;transform-origin:0 0;top:225.00px;font-size:10px;font-weight:400;color:#fff;font-style:normal;transform:scaleX(0.8942);">HHS EQUIPAMENTOS E SERVICOS LTDA</span>
<span id="t38" class="t" style="left:513px;transform-origin:0 0;top:225.00px;font-size:10px;font-weight:400;color:#fff;font-style:normal;">30/12/2025</span>
<span id="t39" class="t" style="left:589.5px;transform-origin:0 0;top:225.00px;font-size:10px;font-weight:400;color:#fff;font-style:normal;">06/01/2026</span>
<span id="t40" class="t" style="right:325.75px;transform-origin:100% 0;top:225.00px;font-size:10px;font-weight:400;color:#fff;font-style:normal;transform:scaleX(0.9663);">61.960,00</span>
<span id="t41" class="t" style="left:705px;transform-origin:0 0;top:225.00px;font-size:10px;font-weight:400;color:#fff;font-style:normal;transform:scaleX(0.8846);">DAVI</span>
<div class="b" style="left:774.25px;top:220.1px;width:49.25px;height:15.60px;background:#6e6e6e;border-radius:3px"></div>
<span id="t42" class="t" style="left:775.1px;transform-origin:0 0;top:225.00px;font-size:10px;font-weight:400;color:#fff;font-style:normal;transform:scaleX(0.9612);">Separação</span>
<span id="t43" class="t" style="left:838.5px;transform-origin:0 0;top:225.00px;font-size:10px;font-weight:400;color:#fff;font-style:normal;transform:scaleX(0.8966);">VENDA NORMAL</span>
<svg class="i" style="left:56px;top:219px" width="24" height="20" viewBox="56 219 24 20"><circle cx="65.7" cy="229.3" r="7.1" fill="rgba(0,0,0,.2)"/><circle cx="65.7" cy="228.9" r="7" fill="#fff"/><circle cx="65.7" cy="228.9" r="5.6" fill="#d9303c"/><path d="M63.4 228.5H68.6" stroke="#fff" stroke-width="1.1"/><path d="M68.3 230.9L71.6 234.1L77.5 224" fill="none" stroke="#fff" stroke-width="1.7"/></svg>
<span id="t44" class="t" style="left:63.5px;transform-origin:0 0;top:248.00px;font-size:10px;font-weight:700;color:#212529;font-style:normal;transform:scaleX(0.8829);">Ações</span>
<div class="b" style="left:116.3px;top:244.5px;width:13.00px;height:14.90px;background:#f8f9fa;border:1px solid #e9ecef;border-radius:2px"></div>
<svg class="i" style="left:119.3px;top:248px" width="7.4" height="7.2" viewBox="0 0 7.4 7.2"><path d="M.2 3.6H6.6M3.6 .5L6.7 3.6L3.6 6.7" fill="none" stroke="#222" stroke-width="1.25"/></svg>
<div class="b" style="left:131.8px;top:244.5px;width:14.20px;height:14.90px;background:#f8f9fa;border:1px solid #e9ecef;border-radius:2px"></div>
<svg class="i" style="left:134.8px;top:247.9px" width="9.20" height="7.80" viewBox="0 0 576 512" preserveAspectRatio="none"><path fill="#666" d="M402.600 83.200l90.200 90.200c3.800 3.800 3.800 10 0 13.800L274.400 405.600l-92.800 10.300c-12.400 1.400-22.900-9.100-21.500-21.500l10.300-92.800L388.800 83.200c3.800-3.800 10-3.800 13.800 0zm162-22.900l-48.800-48.800c-15.200-15.200-39.900-15.200-55.200 0l-35.400 35.400c-3.800 3.800-3.800 10 0 13.800l90.200 90.200c3.800 3.800 10 3.800 13.800 0l35.400-35.400c15.200-15.300 15.200-40 0-55.200zM384 346.200V448H64V128h229.800c3.200 0 6.200-1.300 8.500-3.500l40-40c7.600-7.600 2.200-20.500-8.500-20.500H48C21.500 64 0 85.500 0 112v352c0 26.500 21.500 48 48 48h352c26.500 0 48-21.500 48-48V306.200c0-10.700-12.900-16-20.500-8.500l-40 40c-2.200 2.300-3.500 5.300-3.500 8.500z"/></svg>
<div class="b" style="left:149.4px;top:244.5px;width:13.90px;height:14.90px;background:#f8f9fa;border:1px solid #e9ecef;border-radius:2px"></div>
<svg class="i" style="left:152.6px;top:247.6px;" width="8.80" height="8.10" viewBox="0.0 -1408.0 1664.0 1536.0" preserveAspectRatio="none"><path fill="#222" transform="scale(1,-1)" d="M384 0h896v256h-896v-256zM384 640h896v384h-160q-40 0 -68 28t-28 68v160h-640v-640zM1536 576q0 26 -19 45t-45 19t-45 -19t-19 -45t19 -45t45 -19t45 19t19 45zM1664 576v-416q0 -13 -9.5 -22.5t-22.5 -9.5h-224v-160q0 -40 -28 -68t-68 -28h-960q-40 0 -68 28t-28 68 v160h-224q-13 0 -22.5 9.5t-9.5 22.5v416q0 79 56.5 135.5t135.5 56.5h64v544q0 40 28 68t68 28h672q40 0 88 -20t76 -48l152 -152q28 -28 48 -76t20 -88v-256h64q79 0 135.5 -56.5t56.5 -135.5z"/></svg>
<div class="b" style="left:166.3px;top:244.5px;width:14.20px;height:14.90px;background:#f8f9fa;border:1px solid #e9ecef;border-radius:2px"></div>
<svg class="i" style="left:169.2px;top:248.6px;" width="8.80" height="6.40" viewBox="0.0 -1280.0 1792.0 1408.0" preserveAspectRatio="none"><path fill="#2b2b2b" transform="scale(1,-1)" d="M1792 826v-794q0 -66 -47 -113t-113 -47h-1472q-66 0 -113 47t-47 113v794q44 -49 101 -87q362 -246 497 -345q57 -42 92.5 -65.5t94.5 -48t110 -24.5h1h1q51 0 110 24.5t94.5 48t92.5 65.5q170 123 498 345q57 39 100 87zM1792 1120q0 -79 -49 -151t-122 -123 q-376 -261 -468 -325q-10 -7 -42.5 -30.5t-54 -38t-52 -32.5t-57.5 -27t-50 -9h-1h-1q-23 0 -50 9t-57.5 27t-52 32.5t-54 38t-42.5 30.5q-91 64 -262 182.5t-205 142.5q-62 42 -117 115.5t-55 136.5q0 78 41.5 130t118.5 52h1472q65 0 112.5 -47t47.5 -113z"/></svg>
<div class="b" style="left:183px;top:244.5px;width:13.30px;height:14.90px;background:#f8f9fa;border:1px solid #e9ecef;border-radius:2px"></div>
<svg class="i" style="left:186.1px;top:247.9px;" width="7.60" height="7.50" viewBox="0.0 -1414.0 1536.0 1548.0" preserveAspectRatio="none"><path fill="#555" transform="scale(1,-1)" d="M985 562q13 0 97.5 -44t89.5 -53q2 -5 2 -15q0 -33 -17 -76q-16 -39 -71 -65.5t-102 -26.5q-57 0 -190 62q-98 45 -170 118t-148 185q-72 107 -71 194v8q3 91 74 158q24 22 52 22q6 0 18 -1.5t19 -1.5q19 0 26.5 -6.5t15.5 -27.5q8 -20 33 -88t25 -75q0 -21 -34.5 -57.5 t-34.5 -46.5q0 -7 5 -15q34 -73 102 -137q56 -53 151 -101q12 -7 22 -7q15 0 54 48.5t52 48.5zM782 32q127 0 243.5 50t200.5 134t134 200.5t50 243.5t-50 243.5t-134 200.5t-200.5 134t-243.5 50t-243.5 -50t-200.5 -134t-134 -200.5t-50 -243.5q0 -203 120 -368l-79 -233 l242 77q158 -104 345 -104zM782 1414q153 0 292.5 -60t240.5 -161t161 -240.5t60 -292.5t-60 -292.5t-161 -240.5t-240.5 -161t-292.5 -60q-195 0 -365 94l-417 -134l136 405q-108 178 -108 389q0 153 60 292.5t161 240.5t240.5 161t292.5 60z"/></svg>
<div class="b" style="left:198.8px;top:244.3px;width:13.20px;height:16.00px;background:#f6f6f6;border:1px solid #e3e3e3;border-right:1.3px solid #6a6a6a;border-bottom:1.3px solid #6a6a6a;border-radius:1.5px"></div>
<svg class="i" style="left:204.5px;top:250.7px" width="3.8" height="2.1" viewBox="0 0 10 6"><path d="M0 0H10L5 6Z" fill="#222"/></svg>
<div class="b" style="left:60px;top:269.0px;width:955.30px;height:23.20px;background:#f2f2f2"></div>
<div class="b" style="left:60px;top:269.0px;width:955.30px;height:0.80px;background:#e9ebee"></div>
<span id="t45" class="t" style="left:87px;transform-origin:0 0;top:278.00px;font-size:10px;font-weight:400;color:#212529;font-style:normal;transform:scaleX(0.9348);">18341</span>
<span id="t46" class="t" style="left:141.5px;transform-origin:0 0;top:278.00px;font-size:10px;font-weight:400;color:#212529;font-style:normal;transform:scaleX(0.9438);">1267</span>
<span id="t47" class="t" style="left:196px;transform-origin:0 0;top:278.00px;font-size:10px;font-weight:400;color:#212529;font-style:normal;transform:scaleX(0.8948);">7Y DISTRIBUIDORA DE FRALDAS LTDA</span>
<span id="t48" class="t" style="left:513px;transform-origin:0 0;top:278.00px;font-size:10px;font-weight:400;color:#212529;font-style:normal;transform:scaleX(1.0139);">28/11/2025</span>
<span id="t49" class="t" style="right:325.75px;transform-origin:100% 0;top:278.00px;font-size:10px;font-weight:400;color:#212529;font-style:normal;transform:scaleX(0.9642);">300,00</span>
<span id="t50" class="t" style="left:705px;transform-origin:0 0;top:278.00px;font-size:10px;font-weight:400;color:#212529;font-style:normal;transform:scaleX(0.8846);">DAVI</span>
<div class="b" style="left:774.25px;top:273.0px;width:49.25px;height:15.60px;background:#6e6e6e;border-radius:3px"></div>
<span id="t51" class="t" style="left:775.1px;transform-origin:0 0;top:277.00px;font-size:10px;font-weight:400;color:#fff;font-style:normal;transform:scaleX(0.9612);">Separação</span>
<span id="t52" class="t" style="left:838.5px;transform-origin:0 0;top:278.00px;font-size:10px;font-weight:400;color:#212529;font-style:normal;transform:scaleX(0.8966);">VENDA NORMAL</span>
<svg class="i" style="left:58.85px;top:274.75px" width="16" height="16" viewBox="0 0 16 16"><circle cx="8" cy="8" r="7.6" fill="rgba(0,0,0,.10)"/><circle cx="8" cy="8" r="7.2" fill="rgba(0,0,0,.12)"/><circle cx="8" cy="8" r="6.8" fill="#fff"/><circle cx="8" cy="8" r="5.55" fill="#0275d8"/><path d="M8 4.9V11.1M5.3 8H10.7" stroke="rgba(255,255,255,.82)" stroke-width=".85" fill="none"/></svg>
<div class="b" style="left:60px;top:292.2px;width:955.30px;height:0.80px;background:#e9ebee"></div>
<span id="t53" class="t" style="left:87px;transform-origin:0 0;top:301.00px;font-size:10px;font-weight:400;color:#212529;font-style:normal;transform:scaleX(0.9348);">18338</span>
<span id="t54" class="t" style="left:141.5px;transform-origin:0 0;top:301.00px;font-size:10px;font-weight:400;color:#212529;font-style:normal;transform:scaleX(0.9438);">1368</span>
<span id="t55" class="t" style="left:196px;transform-origin:0 0;top:301.00px;font-size:10px;font-weight:400;color:#212529;font-style:normal;transform:scaleX(0.8945);">LEYMAR ASSESSORIA CONTABIL EIRELI</span>
<span id="t56" class="t" style="left:513px;transform-origin:0 0;top:301.00px;font-size:10px;font-weight:400;color:#212529;font-style:normal;transform:scaleX(1.0139);">26/11/2025</span>
<span id="t57" class="t" style="left:589.5px;transform-origin:0 0;top:301.00px;font-size:10px;font-weight:400;color:#212529;font-style:normal;transform:scaleX(1.0139);">03/11/2025</span>
<span id="t58" class="t" style="right:325.75px;transform-origin:100% 0;top:301.00px;font-size:10px;font-weight:400;color:#212529;font-style:normal;transform:scaleX(0.9663);">31.191,47</span>
<span id="t59" class="t" style="left:705px;transform-origin:0 0;top:301.00px;font-size:10px;font-weight:400;color:#212529;font-style:normal;transform:scaleX(0.8453);">ROGER</span>
<div class="b" style="left:774.25px;top:296.2px;width:49.25px;height:15.60px;background:#6e6e6e;border-radius:3px"></div>
<span id="t60" class="t" style="left:775.1px;transform-origin:0 0;top:301.00px;font-size:10px;font-weight:400;color:#fff;font-style:normal;transform:scaleX(0.9612);">Separação</span>
<span id="t61" class="t" style="left:838.5px;transform-origin:0 0;top:301.00px;font-size:10px;font-weight:400;color:#212529;font-style:normal;transform:scaleX(0.8966);">VENDA NORMAL</span>
<svg class="i" style="left:58.85px;top:297.95px" width="16" height="16" viewBox="0 0 16 16"><circle cx="8" cy="8" r="7.6" fill="rgba(0,0,0,.10)"/><circle cx="8" cy="8" r="7.2" fill="rgba(0,0,0,.12)"/><circle cx="8" cy="8" r="6.8" fill="#fff"/><circle cx="8" cy="8" r="5.55" fill="#0275d8"/><path d="M8 4.9V11.1M5.3 8H10.7" stroke="rgba(255,255,255,.82)" stroke-width=".85" fill="none"/></svg>
<div class="b" style="left:60px;top:315.4px;width:955.30px;height:23.20px;background:#f2f2f2"></div>
<div class="b" style="left:60px;top:315.4px;width:955.30px;height:0.80px;background:#e9ebee"></div>
<span id="t62" class="t" style="left:87px;transform-origin:0 0;top:324.00px;font-size:10px;font-weight:400;color:#212529;font-style:normal;transform:scaleX(0.9348);">18336</span>
<span id="t63" class="t" style="left:141.5px;transform-origin:0 0;top:324.00px;font-size:10px;font-weight:400;color:#212529;font-style:normal;transform:scaleX(0.9438);">2864</span>
<span id="t64" class="t" style="left:196px;transform-origin:0 0;top:324.00px;font-size:10px;font-weight:400;color:#212529;font-style:normal;transform:scaleX(0.9239);">JULIO AMARAL</span>
<span id="t65" class="t" style="left:513px;transform-origin:0 0;top:324.00px;font-size:10px;font-weight:400;color:#212529;font-style:normal;">24/10/2025</span>
<span id="t66" class="t" style="right:325.75px;transform-origin:100% 0;top:324.00px;font-size:10px;font-weight:400;color:#212529;font-style:normal;transform:scaleX(0.9642);">240,00</span>
<span id="t67" class="t" style="left:705px;transform-origin:0 0;top:324.00px;font-size:10px;font-weight:400;color:#212529;font-style:normal;transform:scaleX(0.8453);">ROGER</span>
<div class="b" style="left:774.25px;top:319.4px;width:49.25px;height:15.60px;background:#6e6e6e;border-radius:3px"></div>
<span id="t68" class="t" style="left:775.1px;transform-origin:0 0;top:324.00px;font-size:10px;font-weight:400;color:#fff;font-style:normal;transform:scaleX(0.9612);">Separação</span>
<span id="t69" class="t" style="left:838.5px;transform-origin:0 0;top:324.00px;font-size:10px;font-weight:400;color:#212529;font-style:normal;transform:scaleX(0.8966);">VENDA NORMAL</span>
<svg class="i" style="left:58.85px;top:321.15px" width="16" height="16" viewBox="0 0 16 16"><circle cx="8" cy="8" r="7.6" fill="rgba(0,0,0,.10)"/><circle cx="8" cy="8" r="7.2" fill="rgba(0,0,0,.12)"/><circle cx="8" cy="8" r="6.8" fill="#fff"/><circle cx="8" cy="8" r="5.55" fill="#0275d8"/><path d="M8 4.9V11.1M5.3 8H10.7" stroke="rgba(255,255,255,.82)" stroke-width=".85" fill="none"/></svg>
<div class="b" style="left:60px;top:338.6px;width:955.30px;height:0.80px;background:#e9ebee"></div>
<span id="t70" class="t" style="left:87px;transform-origin:0 0;top:348.00px;font-size:10px;font-weight:400;color:#212529;font-style:normal;transform:scaleX(0.9348);">18334</span>
<span id="t71" class="t" style="left:141.5px;transform-origin:0 0;top:348.00px;font-size:10px;font-weight:400;color:#212529;font-style:normal;transform:scaleX(0.9438);">2625</span>
<span id="t72" class="t" style="left:196px;transform-origin:0 0;top:348.00px;font-size:10px;font-weight:400;color:#212529;font-style:normal;transform:scaleX(0.8926);">DATA SERVER ACESSORIOS PARA INFORMATICA E MANUTENCAO LTDA</span>
<span id="t73" class="t" style="left:513px;transform-origin:0 0;top:348.00px;font-size:10px;font-weight:400;color:#212529;font-style:normal;">24/10/2025</span>
<span id="t74" class="t" style="left:589.5px;transform-origin:0 0;top:348.00px;font-size:10px;font-weight:400;color:#212529;font-style:normal;">24/10/2025</span>
<span id="t75" class="t" style="right:325.75px;transform-origin:100% 0;top:348.00px;font-size:10px;font-weight:400;color:#212529;font-style:normal;transform:scaleX(0.9502);">2.500,00</span>
<span id="t76" class="t" style="left:705px;transform-origin:0 0;top:348.00px;font-size:10px;font-weight:400;color:#212529;font-style:normal;transform:scaleX(0.8592);">YANKE</span>
<div class="b" style="left:774.25px;top:342.6px;width:49.25px;height:15.60px;background:#6e6e6e;border-radius:3px"></div>
<span id="t77" class="t" style="left:775.1px;transform-origin:0 0;top:347.00px;font-size:10px;font-weight:400;color:#fff;font-style:normal;transform:scaleX(0.9612);">Separação</span>
<span id="t78" class="t" style="left:838.5px;transform-origin:0 0;top:348.00px;font-size:10px;font-weight:400;color:#212529;font-style:normal;transform:scaleX(0.8836);">REMESSA PARA TESTE HOMOLOGAÇÃO</span>
<svg class="i" style="left:58.85px;top:344.35px" width="16" height="16" viewBox="0 0 16 16"><circle cx="8" cy="8" r="7.6" fill="rgba(0,0,0,.10)"/><circle cx="8" cy="8" r="7.2" fill="rgba(0,0,0,.12)"/><circle cx="8" cy="8" r="6.8" fill="#fff"/><circle cx="8" cy="8" r="5.55" fill="#0275d8"/><path d="M8 4.9V11.1M5.3 8H10.7" stroke="rgba(255,255,255,.82)" stroke-width=".85" fill="none"/></svg>
<div class="b" style="left:60px;top:361.8px;width:955.30px;height:23.20px;background:#f2f2f2"></div>
<div class="b" style="left:60px;top:361.8px;width:955.30px;height:0.80px;background:#e9ebee"></div>
<span id="t79" class="t" style="left:87px;transform-origin:0 0;top:371.00px;font-size:10px;font-weight:400;color:#212529;font-style:normal;transform:scaleX(0.9348);">18330</span>
<span id="t80" class="t" style="left:141.5px;transform-origin:0 0;top:371.00px;font-size:10px;font-weight:400;color:#212529;font-style:normal;transform:scaleX(0.9438);">1</span>
<span id="t81" class="t" style="left:196px;transform-origin:0 0;top:371.00px;font-size:10px;font-weight:400;color:#212529;font-style:normal;transform:scaleX(0.8889);">TI24H SERVICOS E COMERCIO LTDA</span>
<span id="t82" class="t" style="left:513px;transform-origin:0 0;top:371.00px;font-size:10px;font-weight:400;color:#212529;font-style:normal;">22/10/2025</span>
<span id="t83" class="t" style="right:325.75px;transform-origin:100% 0;top:371.00px;font-size:10px;font-weight:400;color:#212529;font-style:normal;transform:scaleX(0.9488);">10,00</span>
<span id="t84" class="t" style="left:705px;transform-origin:0 0;top:371.00px;font-size:10px;font-weight:400;color:#212529;font-style:normal;transform:scaleX(0.8994);">sa</span>
<div class="b" style="left:774.25px;top:365.8px;width:49.25px;height:15.60px;background:#6e6e6e;border-radius:3px"></div>
<span id="t85" class="t" style="left:775.1px;transform-origin:0 0;top:370.00px;font-size:10px;font-weight:400;color:#fff;font-style:normal;transform:scaleX(0.9612);">Separação</span>
<span id="t86" class="t" style="left:838.5px;transform-origin:0 0;top:371.00px;font-size:10px;font-weight:400;color:#212529;font-style:normal;transform:scaleX(0.8959);">TESTE EQUIPAMENTOS - BANCADA</span>
<svg class="i" style="left:58.85px;top:367.55px" width="16" height="16" viewBox="0 0 16 16"><circle cx="8" cy="8" r="7.6" fill="rgba(0,0,0,.10)"/><circle cx="8" cy="8" r="7.2" fill="rgba(0,0,0,.12)"/><circle cx="8" cy="8" r="6.8" fill="#fff"/><circle cx="8" cy="8" r="5.55" fill="#0275d8"/><path d="M8 4.9V11.1M5.3 8H10.7" stroke="rgba(255,255,255,.82)" stroke-width=".85" fill="none"/></svg>
<div class="b" style="left:60px;top:385.0px;width:955.30px;height:0.80px;background:#e9ebee"></div>
<span id="t87" class="t" style="left:87px;transform-origin:0 0;top:394.00px;font-size:10px;font-weight:400;color:#212529;font-style:normal;transform:scaleX(0.9348);">18327</span>
<span id="t88" class="t" style="left:141.5px;transform-origin:0 0;top:394.00px;font-size:10px;font-weight:400;color:#212529;font-style:normal;transform:scaleX(0.9438);">1</span>
<span id="t89" class="t" style="left:196px;transform-origin:0 0;top:394.00px;font-size:10px;font-weight:400;color:#212529;font-style:normal;transform:scaleX(0.8889);">TI24H SERVICOS E COMERCIO LTDA</span>
<span id="t90" class="t" style="left:513px;transform-origin:0 0;top:394.00px;font-size:10px;font-weight:400;color:#212529;font-style:normal;">21/10/2025</span>
<span id="t91" class="t" style="right:325.75px;transform-origin:100% 0;top:394.00px;font-size:10px;font-weight:400;color:#212529;font-style:normal;transform:scaleX(0.9502);">3.550,00</span>
<span id="t92" class="t" style="left:705px;transform-origin:0 0;top:394.00px;font-size:10px;font-weight:400;color:#212529;font-style:normal;transform:scaleX(0.8848);">WAGNER</span>
<div class="b" style="left:774.25px;top:389.0px;width:49.25px;height:15.60px;background:#6e6e6e;border-radius:3px"></div>
<span id="t93" class="t" style="left:775.1px;transform-origin:0 0;top:393.00px;font-size:10px;font-weight:400;color:#fff;font-style:normal;transform:scaleX(0.9612);">Separação</span>
<span id="t94" class="t" style="left:838.5px;transform-origin:0 0;top:394.00px;font-size:10px;font-weight:400;color:#212529;font-style:normal;transform:scaleX(0.8959);">TESTE EQUIPAMENTOS - BANCADA</span>
<svg class="i" style="left:58.85px;top:390.75px" width="16" height="16" viewBox="0 0 16 16"><circle cx="8" cy="8" r="7.6" fill="rgba(0,0,0,.10)"/><circle cx="8" cy="8" r="7.2" fill="rgba(0,0,0,.12)"/><circle cx="8" cy="8" r="6.8" fill="#fff"/><circle cx="8" cy="8" r="5.55" fill="#0275d8"/><path d="M8 4.9V11.1M5.3 8H10.7" stroke="rgba(255,255,255,.82)" stroke-width=".85" fill="none"/></svg>
<div class="b" style="left:60px;top:408.2px;width:955.30px;height:23.20px;background:#f2f2f2"></div>
<div class="b" style="left:60px;top:408.2px;width:955.30px;height:0.80px;background:#e9ebee"></div>
<span id="t95" class="t" style="left:87px;transform-origin:0 0;top:417.00px;font-size:10px;font-weight:400;color:#212529;font-style:normal;transform:scaleX(0.9348);">18309</span>
<span id="t96" class="t" style="left:141.5px;transform-origin:0 0;top:417.00px;font-size:10px;font-weight:400;color:#212529;font-style:normal;transform:scaleX(0.9438);">1</span>
<span id="t97" class="t" style="left:196px;transform-origin:0 0;top:417.00px;font-size:10px;font-weight:400;color:#212529;font-style:normal;transform:scaleX(0.8889);">TI24H SERVICOS E COMERCIO LTDA</span>
<span id="t98" class="t" style="left:513px;transform-origin:0 0;top:417.00px;font-size:10px;font-weight:400;color:#212529;font-style:normal;">15/10/2025</span>
<span id="t99" class="t" style="right:325.75px;transform-origin:100% 0;top:417.00px;font-size:10px;font-weight:400;color:#212529;font-style:normal;transform:scaleX(0.9642);">465,03</span>
<span id="t100" class="t" style="left:705px;transform-origin:0 0;top:417.00px;font-size:10px;font-weight:400;color:#212529;font-style:normal;transform:scaleX(0.8853);">RENAN</span>
<div class="b" style="left:774.25px;top:412.2px;width:49.25px;height:15.60px;background:#6e6e6e;border-radius:3px"></div>
<span id="t101" class="t" style="left:775.1px;transform-origin:0 0;top:417.00px;font-size:10px;font-weight:400;color:#fff;font-style:normal;transform:scaleX(0.9612);">Separação</span>
<span id="t102" class="t" style="left:838.5px;transform-origin:0 0;top:417.00px;font-size:10px;font-weight:400;color:#212529;font-style:normal;transform:scaleX(0.8959);">TESTE EQUIPAMENTOS - BANCADA</span>
<svg class="i" style="left:58.85px;top:413.95px" width="16" height="16" viewBox="0 0 16 16"><circle cx="8" cy="8" r="7.6" fill="rgba(0,0,0,.10)"/><circle cx="8" cy="8" r="7.2" fill="rgba(0,0,0,.12)"/><circle cx="8" cy="8" r="6.8" fill="#fff"/><circle cx="8" cy="8" r="5.55" fill="#0275d8"/><path d="M8 4.9V11.1M5.3 8H10.7" stroke="rgba(255,255,255,.82)" stroke-width=".85" fill="none"/></svg>
<div class="b" style="left:60px;top:431.4px;width:955.30px;height:0.80px;background:#e9ebee"></div>
<span id="t103" class="t" style="left:87px;transform-origin:0 0;top:440.00px;font-size:10px;font-weight:400;color:#212529;font-style:normal;transform:scaleX(0.9348);">18307</span>
<span id="t104" class="t" style="left:141.5px;transform-origin:0 0;top:440.00px;font-size:10px;font-weight:400;color:#212529;font-style:normal;transform:scaleX(0.9438);">1</span>
<span id="t105" class="t" style="left:196px;transform-origin:0 0;top:440.00px;font-size:10px;font-weight:400;color:#212529;font-style:normal;transform:scaleX(0.8889);">TI24H SERVICOS E COMERCIO LTDA</span>
<span id="t106" class="t" style="left:513px;transform-origin:0 0;top:440.00px;font-size:10px;font-weight:400;color:#212529;font-style:normal;">13/10/2025</span>
<span id="t107" class="t" style="right:325.75px;transform-origin:100% 0;top:440.00px;font-size:10px;font-weight:400;color:#212529;font-style:normal;transform:scaleX(0.9502);">2.735,22</span>
<span id="t108" class="t" style="left:705px;transform-origin:0 0;top:440.00px;font-size:10px;font-weight:400;color:#212529;font-style:normal;transform:scaleX(0.8853);">RENAN</span>
<div class="b" style="left:774.25px;top:435.4px;width:49.25px;height:15.60px;background:#6e6e6e;border-radius:3px"></div>
<span id="t109" class="t" style="left:775.1px;transform-origin:0 0;top:440.00px;font-size:10px;font-weight:400;color:#fff;font-style:normal;transform:scaleX(0.9612);">Separação</span>
<span id="t110" class="t" style="left:838.5px;transform-origin:0 0;top:440.00px;font-size:10px;font-weight:400;color:#212529;font-style:normal;transform:scaleX(0.8959);">TESTE EQUIPAMENTOS - BANCADA</span>
<svg class="i" style="left:58.85px;top:437.15px" width="16" height="16" viewBox="0 0 16 16"><circle cx="8" cy="8" r="7.6" fill="rgba(0,0,0,.10)"/><circle cx="8" cy="8" r="7.2" fill="rgba(0,0,0,.12)"/><circle cx="8" cy="8" r="6.8" fill="#fff"/><circle cx="8" cy="8" r="5.55" fill="#0275d8"/><path d="M8 4.9V11.1M5.3 8H10.7" stroke="rgba(255,255,255,.82)" stroke-width=".85" fill="none"/></svg>
<span id="t111" class="t" style="left:60px;transform-origin:0 0;top:474.00px;font-size:10px;font-weight:400;color:#212529;font-style:normal;transform:scaleX(0.9771);">Exibindo 1 até 9 de 9 registros</span>
<span id="t112" class="t" style="left:203.75px;transform-origin:0 0;top:474.00px;font-size:10px;font-weight:400;color:#212529;font-style:normal;">Selecionada 1 linha</span>
<div class="b" style="left:885px;top:485.6px;width:129.25px;height:14.40px;background:#fff;border:1px solid #dee2e6;border-radius:3px"></div>
<div class="b" style="left:938px;top:485.6px;width:22.50px;height:14.40px;background:#007bff"></div>
<span id="t113" class="t" style="left:893px;transform-origin:0 0;top:493.00px;font-size:10px;font-weight:400;color:#6c757d;font-style:normal;">Anterior</span>
<span id="t114" class="t" style="left:946.5px;transform-origin:0 0;top:493.00px;font-size:10px;font-weight:400;color:#fff;font-style:normal;transform:scaleX(0.9888);">1</span>
<span id="t115" class="t" style="left:969px;transform-origin:0 0;top:493.00px;font-size:10px;font-weight:400;color:#6c757d;font-style:normal;transform:scaleX(1.0085);">Próximo</span>
<svg class="i" style="left:0;top:0" width="1024" height="487" viewBox="0 0 1024 487"><path d="M352.33 163.21 L353.47 168.29 L111.2 223 L113.75 232.75 L85.4 225.9 L107.5 208.25 L110 218 Z" fill="#e41b1b"/></svg>
</body></html>
